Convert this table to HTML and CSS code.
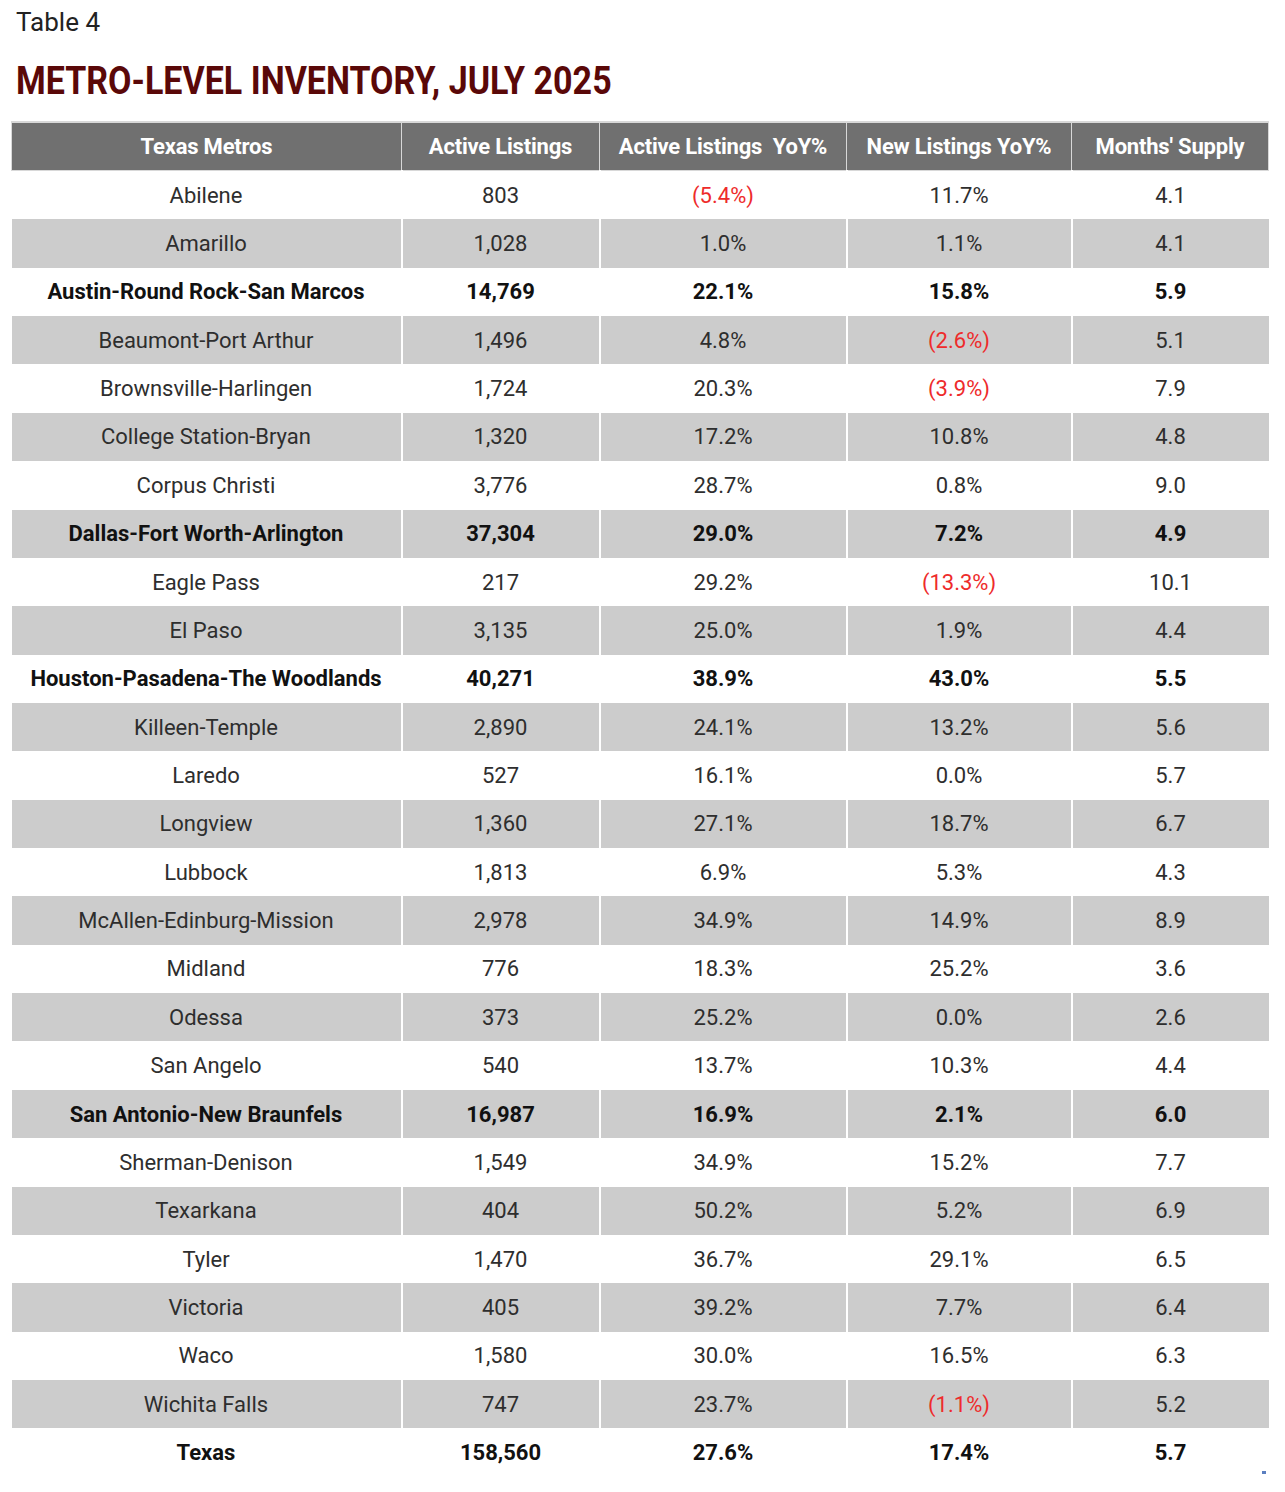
FILE: index.html
```html
<!DOCTYPE html>
<html>
<head>
<meta charset="utf-8">
<link rel="stylesheet" href="styles.css">
</head>
<body>
<div class="page">
  <div class="caption">Table 4</div>
  <h1 class="title"><span>METRO-LEVEL INVENTORY, JULY 2025</span></h1>
  <table class="inv">
    <colgroup>
      <col class="c1"><col class="c2"><col class="c3"><col class="c4"><col class="c5">
    </colgroup>
    <thead>
      <tr><th>Texas Metros</th><th>Active Listings</th><th>Active Listings&nbsp; YoY%</th><th>New Listings YoY%</th><th>Months' Supply</th></tr>
    </thead>
    <tbody>
      <tr><td>Abilene</td><td>803</td><td class="neg">(5.4%)</td><td>11.7%</td><td>4.1</td></tr>
      <tr><td>Amarillo</td><td>1,028</td><td>1.0%</td><td>1.1%</td><td>4.1</td></tr>
      <tr class="b"><td>Austin-Round Rock-San Marcos</td><td>14,769</td><td>22.1%</td><td>15.8%</td><td>5.9</td></tr>
      <tr><td>Beaumont-Port Arthur</td><td>1,496</td><td>4.8%</td><td class="neg">(2.6%)</td><td>5.1</td></tr>
      <tr><td>Brownsville-Harlingen</td><td>1,724</td><td>20.3%</td><td class="neg">(3.9%)</td><td>7.9</td></tr>
      <tr><td>College Station-Bryan</td><td>1,320</td><td>17.2%</td><td>10.8%</td><td>4.8</td></tr>
      <tr><td>Corpus Christi</td><td>3,776</td><td>28.7%</td><td>0.8%</td><td>9.0</td></tr>
      <tr class="b"><td>Dallas-Fort Worth-Arlington</td><td>37,304</td><td>29.0%</td><td>7.2%</td><td>4.9</td></tr>
      <tr><td>Eagle Pass</td><td>217</td><td>29.2%</td><td class="neg">(13.3%)</td><td>10.1</td></tr>
      <tr><td>El Paso</td><td>3,135</td><td>25.0%</td><td>1.9%</td><td>4.4</td></tr>
      <tr class="b"><td>Houston-Pasadena-The Woodlands</td><td>40,271</td><td>38.9%</td><td>43.0%</td><td>5.5</td></tr>
      <tr><td>Killeen-Temple</td><td>2,890</td><td>24.1%</td><td>13.2%</td><td>5.6</td></tr>
      <tr><td>Laredo</td><td>527</td><td>16.1%</td><td>0.0%</td><td>5.7</td></tr>
      <tr><td>Longview</td><td>1,360</td><td>27.1%</td><td>18.7%</td><td>6.7</td></tr>
      <tr><td>Lubbock</td><td>1,813</td><td>6.9%</td><td>5.3%</td><td>4.3</td></tr>
      <tr><td>McAllen-Edinburg-Mission</td><td>2,978</td><td>34.9%</td><td>14.9%</td><td>8.9</td></tr>
      <tr><td>Midland</td><td>776</td><td>18.3%</td><td>25.2%</td><td>3.6</td></tr>
      <tr><td>Odessa</td><td>373</td><td>25.2%</td><td>0.0%</td><td>2.6</td></tr>
      <tr><td>San Angelo</td><td>540</td><td>13.7%</td><td>10.3%</td><td>4.4</td></tr>
      <tr class="b"><td>San Antonio-New Braunfels</td><td>16,987</td><td>16.9%</td><td>2.1%</td><td>6.0</td></tr>
      <tr><td>Sherman-Denison</td><td>1,549</td><td>34.9%</td><td>15.2%</td><td>7.7</td></tr>
      <tr><td>Texarkana</td><td>404</td><td>50.2%</td><td>5.2%</td><td>6.9</td></tr>
      <tr><td>Tyler</td><td>1,470</td><td>36.7%</td><td>29.1%</td><td>6.5</td></tr>
      <tr><td>Victoria</td><td>405</td><td>39.2%</td><td>7.7%</td><td>6.4</td></tr>
      <tr><td>Waco</td><td>1,580</td><td>30.0%</td><td>16.5%</td><td>6.3</td></tr>
      <tr><td>Wichita Falls</td><td>747</td><td>23.7%</td><td class="neg">(1.1%)</td><td>5.2</td></tr>
      <tr class="b"><td>Texas</td><td>158,560</td><td>27.6%</td><td>17.4%</td><td>5.7</td></tr>
    </tbody>
  </table>
  <span class="corner"></span>
</div>
</body>
</html>
```
FILE: styles.css
```css
html, body {
  margin: 0;
  padding: 0;
  background: #ffffff;
}
body {
  font-family: Roboto, "Liberation Sans", sans-serif;
  color: #222222;
}
.page {
  position: relative;
  width: 1285px;
  height: 1492px;
  padding: 0 0 0 11px;
  box-sizing: border-box;
}
.caption {
  padding: 6px 0 0 5px;
  font-size: 26px;
  line-height: 32px;
  color: #222;
}
.title {
  margin: 23px 0 0 5px;
  height: 46px;
  font-size: 38px;
  line-height: 40px;
  font-weight: 700;
  color: #5a0808;
  white-space: nowrap;
}
.title span {
  display: inline-block;
  transform: scaleX(0.895);
  transform-origin: left center;
}
.inv {
  margin-top: 14px;
  width: 1257px;
  border-collapse: collapse;
  table-layout: fixed;
  font-size: 22px;
}
.c1 { width: 390px; }
.c2 { width: 198px; }
.c3 { width: 247px; }
.c4 { width: 225px; }
.c5 { width: 197px; }
.inv th {
  height: 47px;
  padding: 0;
  background: #707070;
  color: #ffffff;
  font-weight: 700;
  letter-spacing: -0.2px;
  border: 1px solid #d8d8d8;
  border-top: 2px solid #d8d8d8;
  text-align: center;
  white-space: nowrap;
}
.inv td {
  height: 48.37px;
  padding: 0;
  text-align: center;
  border-left: 2px solid #ffffff;
  white-space: nowrap;
  color: #2e2e2e;
}
.inv td:first-child { border-left: none; }
.inv tbody tr:nth-child(even) td {
  background: #cccccc;
}
.inv tr.b td {
  font-weight: 700;
  color: #111;
}
.inv td.neg {
  color: #ee2b2b;
}
.corner {
  position: absolute;
  left: 1262px;
  top: 1471px;
  width: 4px;
  height: 3px;
  background: #5b7fc0;
}
```
